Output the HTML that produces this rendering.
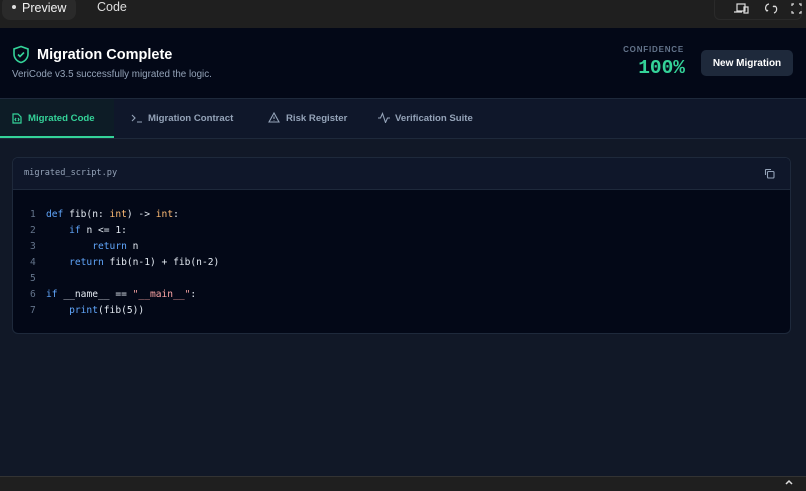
<!DOCTYPE html>
<html><head><style>
*{margin:0;padding:0;box-sizing:border-box}
body{width:806px;height:491px;overflow:hidden;background:#111827;font-family:"Liberation Sans",sans-serif;position:relative}
.top{position:absolute;left:0;top:0;width:806px;height:28px;background:#1f1f1f}
.pill{position:absolute;top:-4px;left:2px;width:74px;height:24px;background:#2a2a2a;border-radius:8px;color:#f2f2f2;font-size:12.5px;padding:5px 0 0 10px}
.pill b{display:inline-block;width:4px;height:4px;border-radius:50%;background:#ddd;margin-right:6px;vertical-align:3px}
.code{position:absolute;left:97px;top:0;color:#ddd;font-size:12.5px}
.icons{position:absolute;right:4px;top:-4px;width:88px;height:24px;border:1px solid #2a2a2a;border-radius:6px}
.hdr{position:absolute;left:0;top:28px;width:806px;height:71px;background:#030817;border-bottom:1px solid #1e293b}
.tabs{position:absolute;left:0;top:99px;width:806px;height:40px;background:#0f172a;border-bottom:1px solid #1e293b}
.tab{position:absolute;top:0;height:39px;font-size:9.6px;color:#94a3b8;padding-top:14px;font-weight:bold}
.card{position:absolute;left:12px;top:157px;width:779px;height:177px;background:#030817;border:1px solid #1e293b;border-radius:6px;overflow:hidden}
.ch{height:32px;background:#0f172a;border-bottom:1px solid #1e293b;font-family:"DejaVu Sans Mono",monospace;font-size:8.6px;color:#94a3b8;padding:10px 0 0 11px}
pre{font-family:"DejaVu Sans Mono",monospace;font-size:9.6px;line-height:16px;color:#e2e8f0;position:absolute;top:49px;left:17px}
.n{color:#64748b;display:inline-block;width:16px}
.k{color:#60a5fa}.t{color:#fdba74}.s{color:#fca5a5}
.bot{position:absolute;left:0;top:476px;width:806px;height:15px;background:#1f1f1f;border-top:1px solid #333}
</style></head><body>
<div class="top">
<div class="pill"><b></b>Preview</div>
<div class="code" style="top:0">Code</div>
<div class="icons">
<svg width="88" height="24" style="position:absolute;left:0;top:0" fill="none" stroke="#ddd" stroke-width="1.2">
<rect x="22" y="7" width="8" height="7"/><path d="M19 15h8M29 10h4v6h-4z"/>
<path d="M54 7a4 4 0 0 0-2 7M60 9a4 4 0 0 1-1 7M51 13l1 1 1-1M58 10l1-1 1 1"/>
<path d="M79 7h-2v2M84 7h2v2M79 16h-2v-2M84 16h2v-2"/>
</svg></div>
</div>
<div class="hdr">
<svg style="position:absolute;left:12px;top:17px" width="18" height="19" viewBox="0 0 18 19" fill="none" stroke="#34d399" stroke-width="1.6"><path d="M9 1.5L2 4v5c0 4 3 7.5 7 8.5 4-1 7-4.5 7-8.5V4z"/><path d="M6 9.5l2 2 4-4"/></svg>
<div style="position:absolute;left:37px;top:19px;color:#fff;font-weight:bold;font-size:14.5px">Migration Complete</div>
<div style="position:absolute;left:12px;top:41px;color:#94a3b8;font-size:9.8px">VeriCode v3.5 successfully migrated the logic.</div>
<div style="position:absolute;right:122px;top:17px;color:#64748b;font-size:8px;font-weight:bold;letter-spacing:.8px">CONFIDENCE</div>
<div style="position:absolute;right:121px;top:29px;color:#34d399;font-size:19.5px;font-weight:bold;font-family:'Liberation Mono',monospace">100%</div>
<div style="position:absolute;left:701px;top:22px;width:92px;height:26px;background:#1e293b;border-radius:5px;color:#fff;font-size:10px;font-weight:bold;text-align:center;padding-top:8px">New Migration</div>
</div>
<div class="tabs">
<div class="tab" style="left:0;width:114px;color:#34d399;background:#0d1c26;border-bottom:2px solid #34d399;padding-left:28px">Migrated Code
<svg style="position:absolute;left:12px;top:14px" width="10" height="11" fill="none" stroke="#34d399" stroke-width="1.2"><path d="M1 1h5l3 3v6H1z"/><path d="M4 5l-1 1.5 1 1.5M6 5l1 1.5-1 1.5"/></svg></div>
<div class="tab" style="left:131px;padding-left:17px">Migration Contract
<svg style="position:absolute;left:0;top:14px" width="12" height="10" fill="none" stroke="#94a3b8" stroke-width="1.1"><path d="M1 2l3 3-3 3M6 9h5"/></svg></div>
<div class="tab" style="left:268px;padding-left:18px">Risk Register
<svg style="position:absolute;left:0;top:13px" width="12" height="11" fill="none" stroke="#94a3b8" stroke-width="1.1"><path d="M6 1L1 10h10z M6 4.5v2.5M6 8.3v.4"/></svg></div>
<div class="tab" style="left:378px;padding-left:17px">Verification Suite
<svg style="position:absolute;left:0;top:13px" width="12" height="11" fill="none" stroke="#94a3b8" stroke-width="1.1"><path d="M0 6h2.5l2-4.5 3 9 2-4.5H12"/></svg></div>
</div>
<div class="card">
<div class="ch">migrated_script.py
<svg style="position:absolute;right:15px;top:10px" width="11" height="11" fill="none" stroke="#94a3b8" stroke-width="1.1"><rect x="3.5" y="3.5" width="6.5" height="6.5" rx="1"/><path d="M7 1.5H2a.5.5 0 0 0-.5.5v5"/></svg></div>
<pre><span class="n">1</span><span class="k">def</span> fib(n: <span class="t">int</span>) -&gt; <span class="t">int</span>:
<span class="n">2</span>    <span class="k">if</span> n &lt;= 1:
<span class="n">3</span>        <span class="k">return</span> n
<span class="n">4</span>    <span class="k">return</span> fib(n-1) + fib(n-2)
<span class="n">5</span>
<span class="n">6</span><span class="k">if</span> __name__ == <span class="s">"__main__"</span>:
<span class="n">7</span>    <span class="k">print</span>(fib(5))</pre>
</div>
<div class="bot"><svg style="position:absolute;left:784px;top:0" width="10" height="10" fill="none" stroke="#ddd" stroke-width="1.5"><path d="M2 7l3-3 3 3"/></svg></div>
</body></html>
